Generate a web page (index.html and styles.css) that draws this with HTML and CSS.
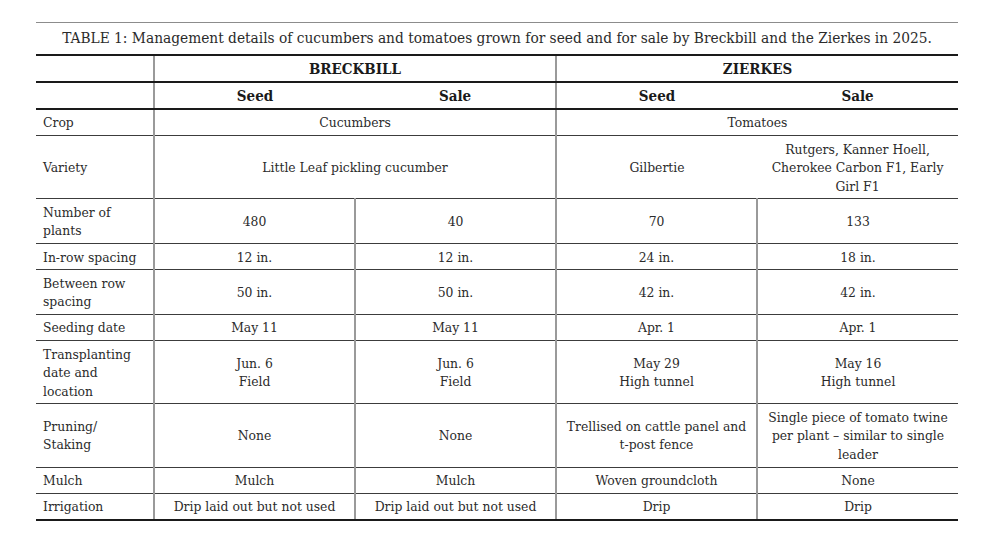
FILE: index.html
```html
<!DOCTYPE html>
<html lang="en">
<head>
<meta charset="utf-8">
<title>Table 1</title>
<link rel="stylesheet" href="styles.css">
</head>
<body>
<div class="wrap">
  <div class="caption">TABLE 1: Management details of cucumbers and tomatoes grown for seed and for sale by Breckbill and the Zierkes in 2025.</div>
  <table class="tbl">
    <colgroup>
      <col class="c-label">
      <col class="c-data">
      <col class="c-data">
      <col class="c-data">
      <col class="c-data">
    </colgroup>
    <thead>
      <tr class="group">
        <th class="label"></th>
        <th class="vl" colspan="2">BRECKBILL</th>
        <th class="vl" colspan="2">ZIERKES</th>
      </tr>
      <tr class="sub">
        <th class="label"></th>
        <th class="vl">Seed</th>
        <th>Sale</th>
        <th class="vl">Seed</th>
        <th>Sale</th>
      </tr>
    </thead>
    <tbody>
      <tr class="first">
        <td class="label">Crop</td>
        <td class="vl" colspan="2">Cucumbers</td>
        <td class="vl" colspan="2">Tomatoes</td>
      </tr>
      <tr>
        <td class="label">Variety</td>
        <td class="vl" colspan="2">Little Leaf pickling cucumber</td>
        <td class="vl">Gilbertie</td>
        <td>Rutgers, Kanner Hoell,<br>Cherokee Carbon F1, Early<br>Girl F1</td>
      </tr>
      <tr>
        <td class="label">Number of<br>plants</td>
        <td class="vl">480</td>
        <td class="vl">40</td>
        <td class="vl">70</td>
        <td class="vl">133</td>
      </tr>
      <tr>
        <td class="label">In-row spacing</td>
        <td class="vl">12 in.</td>
        <td class="vl">12 in.</td>
        <td class="vl">24 in.</td>
        <td class="vl">18 in.</td>
      </tr>
      <tr>
        <td class="label">Between row<br>spacing</td>
        <td class="vl">50 in.</td>
        <td class="vl">50 in.</td>
        <td class="vl">42 in.</td>
        <td class="vl">42 in.</td>
      </tr>
      <tr>
        <td class="label">Seeding date</td>
        <td class="vl">May 11</td>
        <td class="vl">May 11</td>
        <td class="vl">Apr. 1</td>
        <td class="vl">Apr. 1</td>
      </tr>
      <tr>
        <td class="label">Transplanting<br>date and<br>location</td>
        <td class="vl">Jun. 6<br>Field</td>
        <td class="vl">Jun. 6<br>Field</td>
        <td class="vl">May 29<br>High tunnel</td>
        <td class="vl">May 16<br>High tunnel</td>
      </tr>
      <tr>
        <td class="label">Pruning/<br>Staking</td>
        <td class="vl">None</td>
        <td class="vl">None</td>
        <td class="vl">Trellised on cattle panel and<br>t-post fence</td>
        <td class="vl">Single piece of tomato twine<br>per plant – similar to single<br>leader</td>
      </tr>
      <tr>
        <td class="label">Mulch</td>
        <td class="vl">Mulch</td>
        <td class="vl">Mulch</td>
        <td class="vl">Woven groundcloth</td>
        <td class="vl">None</td>
      </tr>
      <tr class="last">
        <td class="label">Irrigation</td>
        <td class="vl">Drip laid out but not used</td>
        <td class="vl">Drip laid out but not used</td>
        <td class="vl">Drip</td>
        <td class="vl">Drip</td>
      </tr>
    </tbody>
  </table>
</div>
</body>
</html>
```
FILE: styles.css
```css
html, body {
  margin: 0;
  padding: 0;
  background: #ffffff;
}

body {
  font-family: "DejaVu Serif Condensed", "DejaVu Serif", "Liberation Serif", serif;
  font-stretch: condensed;
  color: #2b2b2b;
}

.wrap {
  width: 922px;
  padding: 22px 0 0 36px;
}

.caption {
  border-top: 1px solid #8c8c8c;
  height: 31px;
  line-height: 31px;
  text-align: center;
  font-size: 15.3px;
  white-space: nowrap;
}

.tbl {
  width: 922px;
  border-collapse: collapse;
  table-layout: fixed;
  font-size: 13.75px;
}

.c-label { width: 118px; }
.c-data { width: 201px; }

.tbl th,
.tbl td {
  text-align: center;
  vertical-align: middle;
  white-space: nowrap;
}

.tbl th {
  padding: 3.5px 4px;
  line-height: 18px;
  font-size: 15px;
  font-weight: bold;
  color: #1a1a1a;
}

.tbl td {
  padding: 3.45px 4px;
  line-height: 18.4px;
  border-bottom: 1px solid #3c3c3c;
}

.tbl .label {
  text-align: left;
  padding-left: 7px;
}

.tbl .vl {
  border-left: 2px solid #9a9a9a;
}

.group th {
  border-top: 2px solid #1a1a1a;
  border-bottom: 2px solid #1a1a1a;
}

.sub th {
  border-bottom: 2px solid #1a1a1a;
}

.last td {
  border-bottom: 2px solid #1a1a1a;
}
```
